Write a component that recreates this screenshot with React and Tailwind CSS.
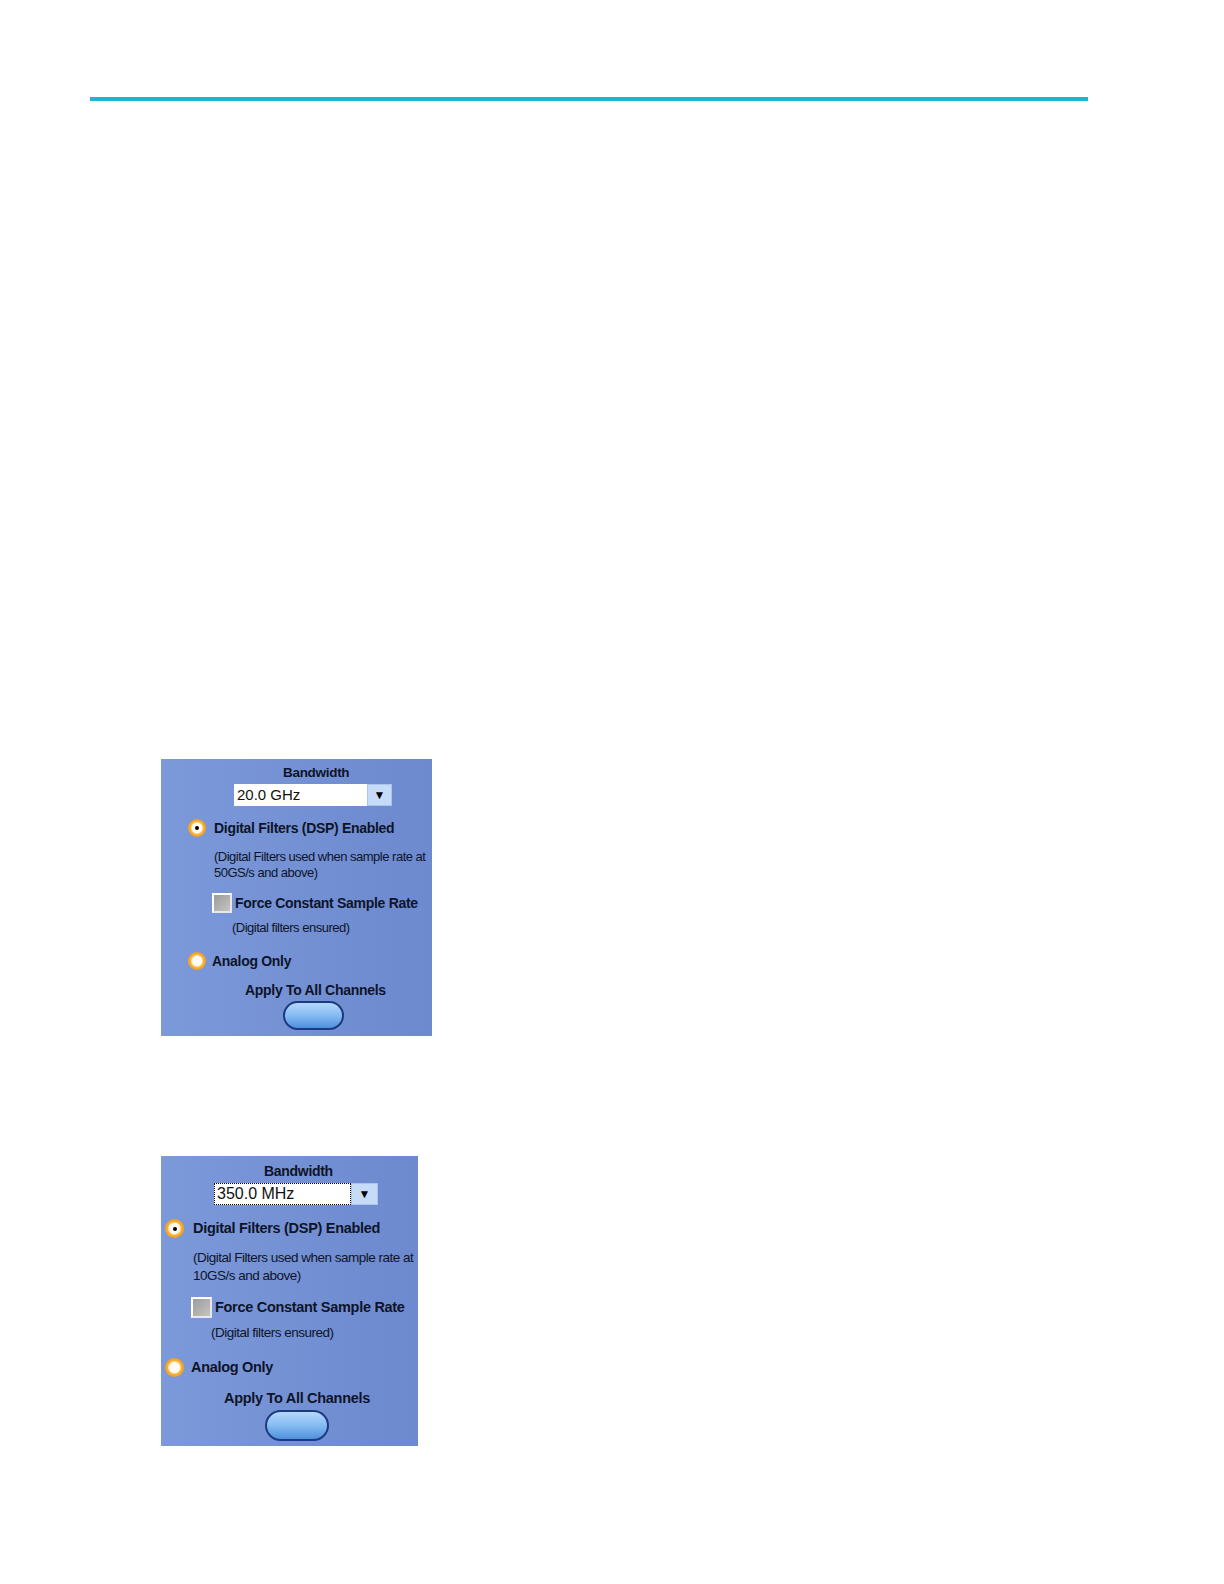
const PANELS = [
  {
    box: 'ml-[161px] mt-[658px] w-[271px] h-[277px] pt-[6px]',
    bwText: 'ml-[122px] text-[13.5px] leading-[16px]',
    dropdown: 'ml-[73px] mt-[3px] h-[22px]',
    input: 'w-[133px] text-[15px] pl-[3px]',
    inputFocus: false,
    arrow: 'w-[25px]',
    value: '20.0 GHz',
    radio1: 'ml-[27px] mt-[13px] h-[18px] gap-[8px]',
    radioSize: 'w-[18px] h-[18px]',
    label: 'text-[14px] tracking-[-0.3px]',
    desc: 'ml-[53px] mt-[12px] text-[13px] leading-[16px]',
    rate: '50GS/s',
    check: 'ml-[51px] mt-[12px] h-[20px] gap-[3px]',
    checkSize: 'w-[20px] h-[20px]',
    ensured: 'ml-[71px] mt-[7px] text-[13px] leading-[16px]',
    radio2: 'ml-[27px] mt-[16px] h-[18px] gap-[6px]',
    apply: 'ml-[84px] mt-[12px] text-[14px] tracking-[-0.3px] leading-[16px]',
    button: 'ml-[122px] mt-[3px] w-[61px] h-[29px]'
  },
  {
    box: 'ml-[161px] mt-[120px] w-[257px] h-[290px] pt-[7px]',
    bwText: 'ml-[103px] text-[14px] leading-[16px]',
    dropdown: 'ml-[53px] mt-[4px] h-[22px]',
    input: 'w-[137px] text-[16px] pl-[2px]',
    inputFocus: true,
    arrow: 'w-[27px]',
    value: '350.0 MHz',
    radio1: 'ml-[4px] mt-[14px] h-[19px] gap-[9px]',
    radioSize: 'w-[19px] h-[19px]',
    label: 'text-[14.5px] tracking-[-0.3px]',
    desc: 'ml-[32px] mt-[11px] text-[13.5px] leading-[18px]',
    rate: '10GS/s',
    check: 'ml-[30px] mt-[12px] h-[21px] gap-[3px]',
    checkSize: 'w-[21px] h-[21px]',
    ensured: 'ml-[50px] mt-[7px] text-[13.5px] leading-[16px]',
    radio2: 'ml-[4px] mt-[17px] h-[19px] gap-[7px]',
    apply: 'ml-[63px] mt-[13px] text-[14.5px] tracking-[-0.3px] leading-[16px]',
    button: 'ml-[104px] mt-[4px] w-[64px] h-[31px]'
  }
]

function Radio({ size, checked }) {
  return (
    <div className={`${size} shrink-0 rounded-full flex items-center justify-center bg-[radial-gradient(circle,#ffffff_0%,#fff8ea_38%,#f8b030_52%,#f09a18_75%,#c27410_100%)]`}>
      {checked && <div className="w-[4px] h-[4px] rounded-full bg-black" />}
    </div>
  )
}

function Panel({ p }) {
  const narrow = { fontFamily: '"Liberation Sans Narrow", "Liberation Sans", Arial, sans-serif' }
  return (
    <div className={`${p.box} flex flex-col text-[#0e1428] bg-gradient-to-r from-[#7c99da] to-[#6d89cf]`} style={{ fontFamily: '"Liberation Sans", Arial, sans-serif' }}>
      <div className={`${p.bwText} font-bold tracking-[-0.3px]`}>Bandwidth</div>
      <div className={`${p.dropdown} flex`}>
        <div className={`${p.input} h-full bg-white flex items-center text-[#111] ${p.inputFocus ? 'border border-dotted border-black' : ''}`}>
          {p.value}
        </div>
        <div className={`${p.arrow} h-full bg-[#c6dbf7] border border-[#a9c4ee] flex items-center justify-center text-[12px] text-black`}>▼</div>
      </div>
      <div className={`${p.radio1} flex items-center`}>
        <Radio size={p.radioSize} checked />
        <span className={`${p.label} font-bold`}>Digital Filters (DSP) Enabled</span>
      </div>
      <div className={`${p.desc} tracking-[-0.5px]`} style={narrow}>
        <div>(Digital Filters used when sample rate at</div>
        <div>{p.rate} and above)</div>
      </div>
      <div className={`${p.check} flex items-center`}>
        <div className={`${p.checkSize} shrink-0 border-2 border-t-white border-l-white border-r-[#e8e8e8] border-b-[#e8e8e8] bg-gradient-to-br from-[#9c9c9c] to-[#c4c4c4]`} />
        <span className={`${p.label} font-bold`}>Force Constant Sample Rate</span>
      </div>
      <div className={`${p.ensured} tracking-[-0.5px]`} style={narrow}>
        (Digital filters ensured)
      </div>
      <div className={`${p.radio2} flex items-center`}>
        <Radio size={p.radioSize} />
        <span className={`${p.label} font-bold`}>Analog Only</span>
      </div>
      <div className={`${p.apply} font-bold`}>Apply To All Channels</div>
      <div className={`${p.button} rounded-full border-2 border-[#1c3a80] bg-gradient-to-b from-[#b4d8fb] via-[#86bbf2] to-[#4f8fdc]`} />
    </div>
  )
}

export default function App() {
  return (
    <div className="w-[1224px] h-[1584px] bg-white pt-[97px]">
      <div className="ml-[90px] w-[998px] h-[4px] bg-[#1fb4d2]" />
      {PANELS.map((p, i) => <Panel key={i} p={p} />)}
    </div>
  )
}
